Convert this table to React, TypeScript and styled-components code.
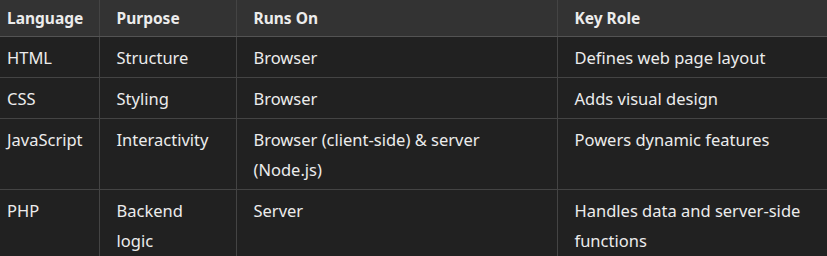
import React from 'react';
import styled, {createGlobalStyle} from "styled-components";

const GlobalStyle = createGlobalStyle`
  html, body {
    margin: 0;
    padding: 0;
    background: #212121;
  }
`

type RowType = {
    language: string
    purpose: string
    runsOn: string
    role: string
}

const rows: RowType[] = [
    {language: 'HTML', purpose: 'Structure', runsOn: 'Browser', role: 'Defines web page layout'},
    {language: 'CSS', purpose: 'Styling', runsOn: 'Browser', role: 'Adds visual design'},
    {language: 'JavaScript', purpose: 'Interactivity', runsOn: 'Browser (client-side) & server (Node.js)', role: 'Powers dynamic features'},
    {language: 'PHP', purpose: 'Backend logic', runsOn: 'Server', role: 'Handles data and server-side functions'},
]

const App = () => {
    return (
        <Wrapper>
            <GlobalStyle/>
            <Table>
                <colgroup>
                    <col style={{width: 99}}/>
                    <col style={{width: 137}}/>
                    <col style={{width: 321}}/>
                    <col style={{width: 270}}/>
                </colgroup>
                <thead>
                <tr>
                    <Th $first>Language</Th>
                    <Th>Purpose</Th>
                    <Th>Runs On</Th>
                    <Th $last>Key Role</Th>
                </tr>
                </thead>
                <tbody>
                {rows.map(r => (
                    <tr key={r.language}>
                        <Td $first>{r.language}</Td>
                        <Td>{r.purpose}</Td>
                        <Td>{r.runsOn}</Td>
                        <Td $last>{r.role}</Td>
                    </tr>
                ))}
                </tbody>
            </Table>
        </Wrapper>
    );
};

export default App;

const Wrapper = styled.div`
  width: 827px;
  height: 256px;
  overflow: hidden;
  background: #212121;
  font-family: "Noto Sans", "Open Sans", sans-serif;
`

const Table = styled.table`
  width: 827px;
  table-layout: fixed;
  border-collapse: collapse;
  border-spacing: 0;
`

type CellProps = {
    $first?: boolean
    $last?: boolean
}

const Th = styled.th<CellProps>`
  background: #333333;
  color: #ececec;
  font-weight: 700;
  font-size: 15.5px;
  line-height: 24px;
  text-align: left;
  white-space: nowrap;
  padding: 6px 8px 6px ${p => p.$first ? '7px' : '17px'};
  border-bottom: 1px solid #535353;
  border-right: ${p => p.$last ? 'none' : '1px solid #444444'};
`

const Td = styled.td<CellProps>`
  color: #ececec;
  font-size: 16.5px;
  line-height: 30px;
  vertical-align: top;
  text-align: left;
  padding: 6px ${p => p.$first ? '4px' : '16px'} 4px ${p => p.$first ? '7px' : '17px'};
  border-bottom: 1px solid #444444;
  border-right: ${p => p.$last ? 'none' : '1px solid #444444'};
`
